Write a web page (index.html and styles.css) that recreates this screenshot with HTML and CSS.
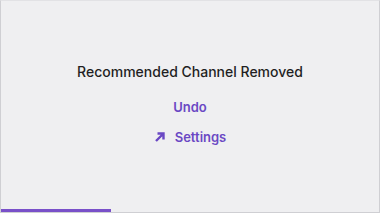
FILE: index.html
```html
<!DOCTYPE html>
<html>
<head>
<meta charset="utf-8">
<link rel="stylesheet" href="styles.css">
</head>
<body>
<div class="card">
  <div class="content">
    <h1 class="title">Recommended Channel Removed</h1>
    <a class="link undo" href="#">Undo</a>
    <a class="link settings" href="#">
      <svg class="icon" width="12" height="12" viewBox="0 0 12 12"><path d="M2 10 L9.5 2.5 M3.5 2.5 H9.5 V8.5" fill="none" stroke="currentColor" stroke-width="2.4"/></svg>
      <span>Settings</span>
    </a>
  </div>
  <div class="progress"><div class="bar" style="width:29%"></div></div>
</div>
</body>
</html>
```
FILE: styles.css
```css
html, body { margin: 0; padding: 0; }
body { width: 380px; height: 213px; font-family: Inter, "Noto Sans", sans-serif; background: #efeff1; }
.card {
  box-sizing: border-box;
  width: 380px; height: 213px;
  border: 1px solid #cfcfd3;
  border-top-color: #e2e2e5;
  background: #efeff1;
  display: flex; flex-direction: column;
}
.content {
  flex: 1;
  display: flex; flex-direction: column; align-items: center;
  padding-top: 62px;
}
.title {
  margin: 0;
  font-size: 14px; font-weight: 500;
  color: #1f1f23;
  line-height: 18px;
}
.link {
  color: #6a48c4;
  text-decoration: none;
  font-size: 13px; font-weight: 600;
  line-height: 16px;
  display: flex; align-items: center;
}
.undo { margin-top: 18px; }
.settings { margin-top: 14px; gap: 9px; }
.icon { display: block; }
.progress { height: 3px; }
.bar { height: 3px; background: #7950c9; }
```
